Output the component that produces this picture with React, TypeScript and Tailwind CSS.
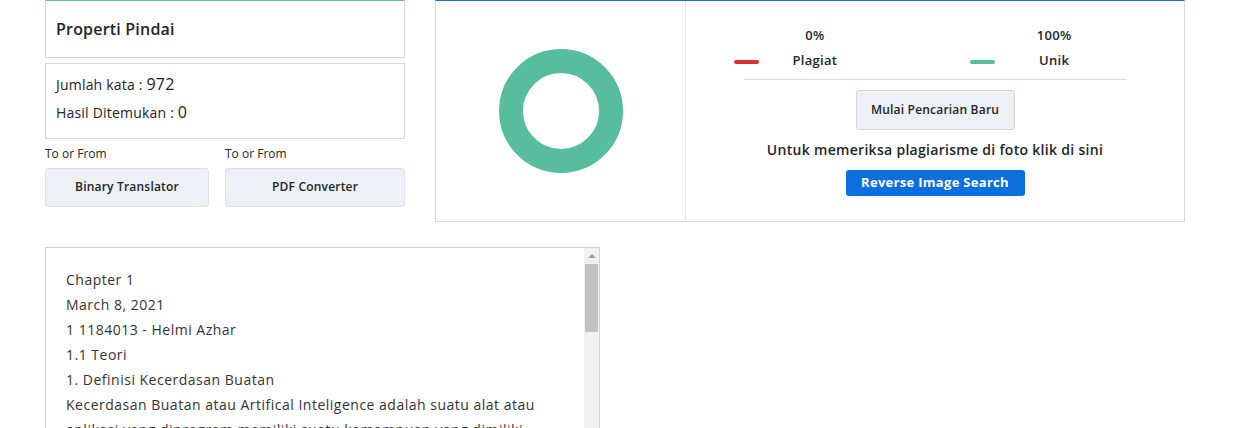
const paragraphs = [
  "Chapter 1",
  "March 8, 2021",
  "1 1184013 - Helmi Azhar",
  "1.1 Teori",
  "1. Definisi Kecerdasan Buatan",
  "Kecerdasan Buatan atau Artifical Inteligence adalah suatu alat atau aplikasi yang diprogram memiliki suatu kemampuan yang dimiliki oleh manusia.",
];

function Donut() {
  return (
    <svg width="124" height="124" viewBox="0 0 124 124">
      <circle cx="62" cy="62" r="50" fill="none" stroke="#57bd9c" strokeWidth="24" />
    </svg>
  );
}

export default function App() {
  return (
    <div
      className="min-h-screen bg-white pl-[45px] text-[#212529]"
      style={{ fontFamily: "'Open Sans', 'Liberation Sans', sans-serif" }}
    >
      <div className="flex gap-[30px]">
        {/* left column */}
        <div className="w-[360px]">
          <div className="flex h-[58px] items-center border border-t-[#5cc39c] border-[#d6d9dc] px-[10px]">
            <h3 className="text-[16px] font-semibold tracking-[0.2px]">Properti Pindai</h3>
          </div>
          <div className="mt-[5px] flex h-[76px] flex-col gap-[7px] border border-[#d6d9dc] px-[10px] pt-[10px] text-[14px] font-medium leading-[20px] tracking-[0.2px]">
            <p>
              Jumlah kata : <span className="text-[16px]">972</span>
            </p>
            <p>
              Hasil Ditemukan : <span className="text-[16px]">0</span>
            </p>
          </div>
          <div className="mt-[6px] flex gap-4">
            <div className="w-[164px]">
              <p className="text-[12px] leading-[18px]">To or From</p>
              <button className="mt-[5px] h-[39px] w-full rounded-[3px] border border-[#dde2e7] bg-[#edf1f5] pb-[2px] text-[12px] font-semibold tracking-[0.2px]">
                Binary Translator
              </button>
            </div>
            <div className="w-[180px]">
              <p className="text-[12px] leading-[18px]">To or From</p>
              <button className="mt-[5px] h-[39px] w-full rounded-[3px] border border-[#dde2e7] bg-[#edf1f5] pb-[2px] text-[12px] font-semibold tracking-[0.2px]">
                PDF Converter
              </button>
            </div>
          </div>
        </div>

        {/* result card */}
        <div className="flex h-[222px] w-[750px] border border-t-[#1f6fc5] border-[#d6d9dc]">
          <div className="flex w-[250px] items-center justify-center border-r border-[#e3e6e9]">
            <Donut />
          </div>
          <div className="flex flex-1 flex-col items-center pt-[22px]">
            <div className="flex w-[383px] justify-between border-b border-[#d8dbde] pb-[6px]">
              <div className="flex items-end gap-[34px]">
                <span className="mb-[9px] ml-[-10px] h-[4px] w-[25px] rounded-full bg-[#d8302f]" />
                <div className="text-center text-[13px] font-semibold leading-[25px] tracking-[0.3px]">
                  <p>0%</p>
                  <p>Plagiat</p>
                </div>
              </div>
              <div className="flex items-end gap-[42px] pr-[55px]">
                <span className="mb-[9px] h-[4px] w-[25px] rounded-full bg-[#57bd9c]" />
                <div className="text-center text-[13px] font-semibold leading-[25px] tracking-[0.3px]">
                  <p>100%</p>
                  <p>Unik</p>
                </div>
              </div>
            </div>
            <button className="mt-[10px] h-[40px] w-[159px] rounded-[3px] border border-[#d3d8dd] bg-[#edf1f5] text-[12px] font-semibold tracking-[0.2px]">
              Mulai Pencarian Baru
            </button>
            <p className="mt-[10px] text-[14px] font-semibold leading-[20px] tracking-[0.3px]">
              Untuk memeriksa plagiarisme di foto klik di sini
            </p>
            <button className="mt-[10px] h-[26px] w-[179px] rounded-[3px] bg-[#0b6fde] text-[13px] font-bold tracking-[0.3px] text-white">
              Reverse Image Search
            </button>
          </div>
        </div>
      </div>

      {/* text area */}
      <div className="mt-[25px] flex h-[300px] w-[555px] overflow-hidden border border-[#cfd3d7]">
        <div className="flex-1 overflow-hidden pl-[20px] pr-[30px] pt-[19px] text-[14px] leading-[25px] tracking-[0.5px] text-[#333]">
          {paragraphs.map((p) => (
            <p key={p}>{p}</p>
          ))}
        </div>
        <div className="flex w-[15px] flex-col items-center bg-[#f1f1f1]">
          <div className="mt-[6px] h-0 w-0 border-x-[4px] border-b-[4px] border-x-transparent border-b-[#a3a3a3]" />
          <div className="mt-[6px] h-[68px] w-[13px] bg-[#c1c1c1]" />
        </div>
      </div>
    </div>
  );
}
